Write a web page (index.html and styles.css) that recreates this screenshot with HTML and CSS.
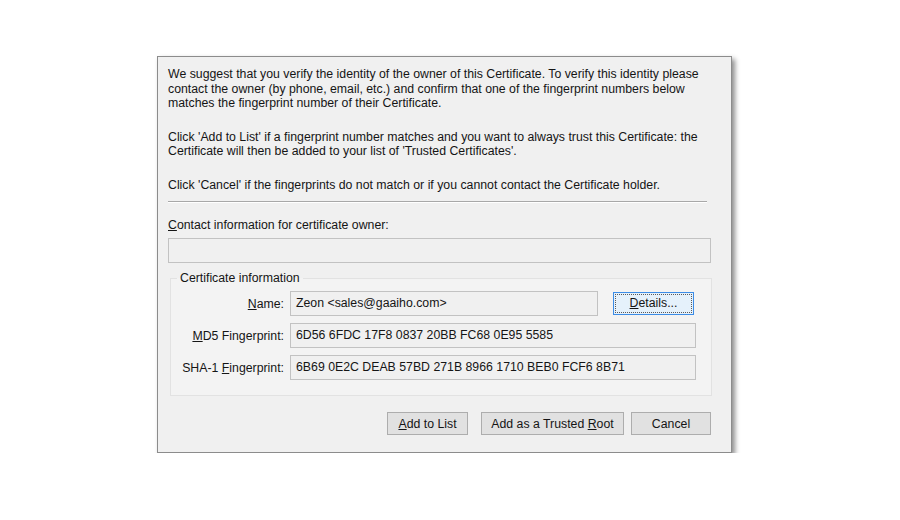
FILE: index.html
```
<!DOCTYPE html>
<html>
<head>
  <meta charset="UTF-8">
  <title>Certificate fingerprint</title>
  <link rel="stylesheet" href="styles.css">
</head>
<body>
  <div class="dialog">
    <p class="para">We suggest that you verify the identity of the owner of this Certificate. To verify this identity please contact the owner (by phone, email, etc.) and confirm that one of the fingerprint numbers below matches the fingerprint number of their Certificate.</p>
    <p class="para">Click 'Add to List' if a fingerprint number matches and you want to always trust this Certificate: the Certificate will then be added to your list of 'Trusted Certificates'.</p>
    <p class="para">Click 'Cancel' if the fingerprints do not match or if you cannot contact the Certificate holder.</p>

    <div class="separator"></div>

    <label class="contact-label"><u>C</u>ontact information for certificate owner:</label>
    <div class="field contact-field"></div>

    <fieldset class="group">
      <legend>Certificate information</legend>
      <div class="row">
        <span class="row-label"><u>N</u>ame:</span>
        <div class="name-line">
          <div class="field">Zeon &lt;sales@gaaiho.com&gt;</div>
          <button class="btn btn-focus"><span class="focus-ring"><u>D</u>etails...</span></button>
        </div>
      </div>
      <div class="row">
        <span class="row-label"><u>M</u>D5 Fingerprint:</span>
        <div class="field">6D56 6FDC 17F8 0837 20BB FC68 0E95 5585</div>
      </div>
      <div class="row">
        <span class="row-label">SHA-1 <u>F</u>ingerprint:</span>
        <div class="field">6B69 0E2C DEAB 57BD 271B 8966 1710 BEB0 FCF6 8B71</div>
      </div>
    </fieldset>

    <div class="actions">
      <button class="btn btn-add"><u>A</u>dd to List</button>
      <button class="btn btn-root">Add as a Trusted <u>R</u>oot</button>
      <button class="btn btn-cancel">Cancel</button>
    </div>
  </div>
</body>
</html>
```

FILE: styles.css
```
* {
  box-sizing: border-box;
  margin: 0;
  padding: 0;
}

body {
  background-color: #ffffff;
  font-family: 'Liberation Sans', Arial, sans-serif;
  font-size: 12.3px;
  color: #151515;
}

.dialog {
  width: 575px;
  height: 397px;
  margin: 56px 0 0 157px;
  padding: 10px 19px 0 10px;
  background-color: #f0f0f0;
  border: 1px solid #8c8c8c;
  box-shadow: 3px 3px 5px rgba(0, 0, 0, 0.45);
}

.para {
  line-height: 14.5px;
  margin-bottom: 19px;
  padding-right: 4px;
}

.para:nth-of-type(3) {
  margin-bottom: 9px;
}

.separator {
  height: 2px;
  margin-right: 5px;
  border-top: 1px solid #a8a8a8;
  border-bottom: 1px solid #ffffff;
}

.contact-label {
  display: block;
  margin-top: 15px;
  line-height: 14px;
}

.field {
  height: 25px;
  padding: 0 5px;
  line-height: 23px;
  background-color: #f0f0f0;
  border: 1px solid #c2c2c2;
  white-space: nowrap;
}

.contact-field {
  margin-top: 6px;
  margin-right: 1px;
}

.group {
  margin: 8px 0 0 2px;
  padding: 6px 15px 15px 0;
  border: 1px solid #e2e2e2;
  background-color: #f3f3f3;
}

.group legend {
  margin-left: 6px;
  padding: 0 3px;
  line-height: 14px;
}

.row {
  display: grid;
  grid-template-columns: 113px 1fr;
  column-gap: 6px;
  align-items: center;
  margin-bottom: 7px;
}

.row:last-child {
  margin-bottom: 0;
}

.row-label {
  text-align: right;
}

.name-line {
  display: flex;
  align-items: center;
}

.name-line .field {
  width: 308px;
}

.btn {
  height: 23px;
  font-family: inherit;
  font-size: inherit;
  color: #151515;
  background-color: #e1e1e1;
  border: 1px solid #adadad;
}

.btn-focus {
  width: 81px;
  margin-left: 15px;
  padding: 1px;
  background-color: #e5f1fb;
  border-color: #3c8ce6;
}

.focus-ring {
  display: block;
  height: 100%;
  line-height: 17px;
  border: 1px dotted #5a5a5a;
}

.actions {
  display: flex;
  justify-content: flex-end;
  margin-top: 16px;
  margin-right: 1px;
}

.btn-add {
  width: 81px;
}

.btn-root {
  width: 143px;
  margin-left: 13px;
}

.btn-cancel {
  width: 80px;
  margin-left: 7px;
}
```
